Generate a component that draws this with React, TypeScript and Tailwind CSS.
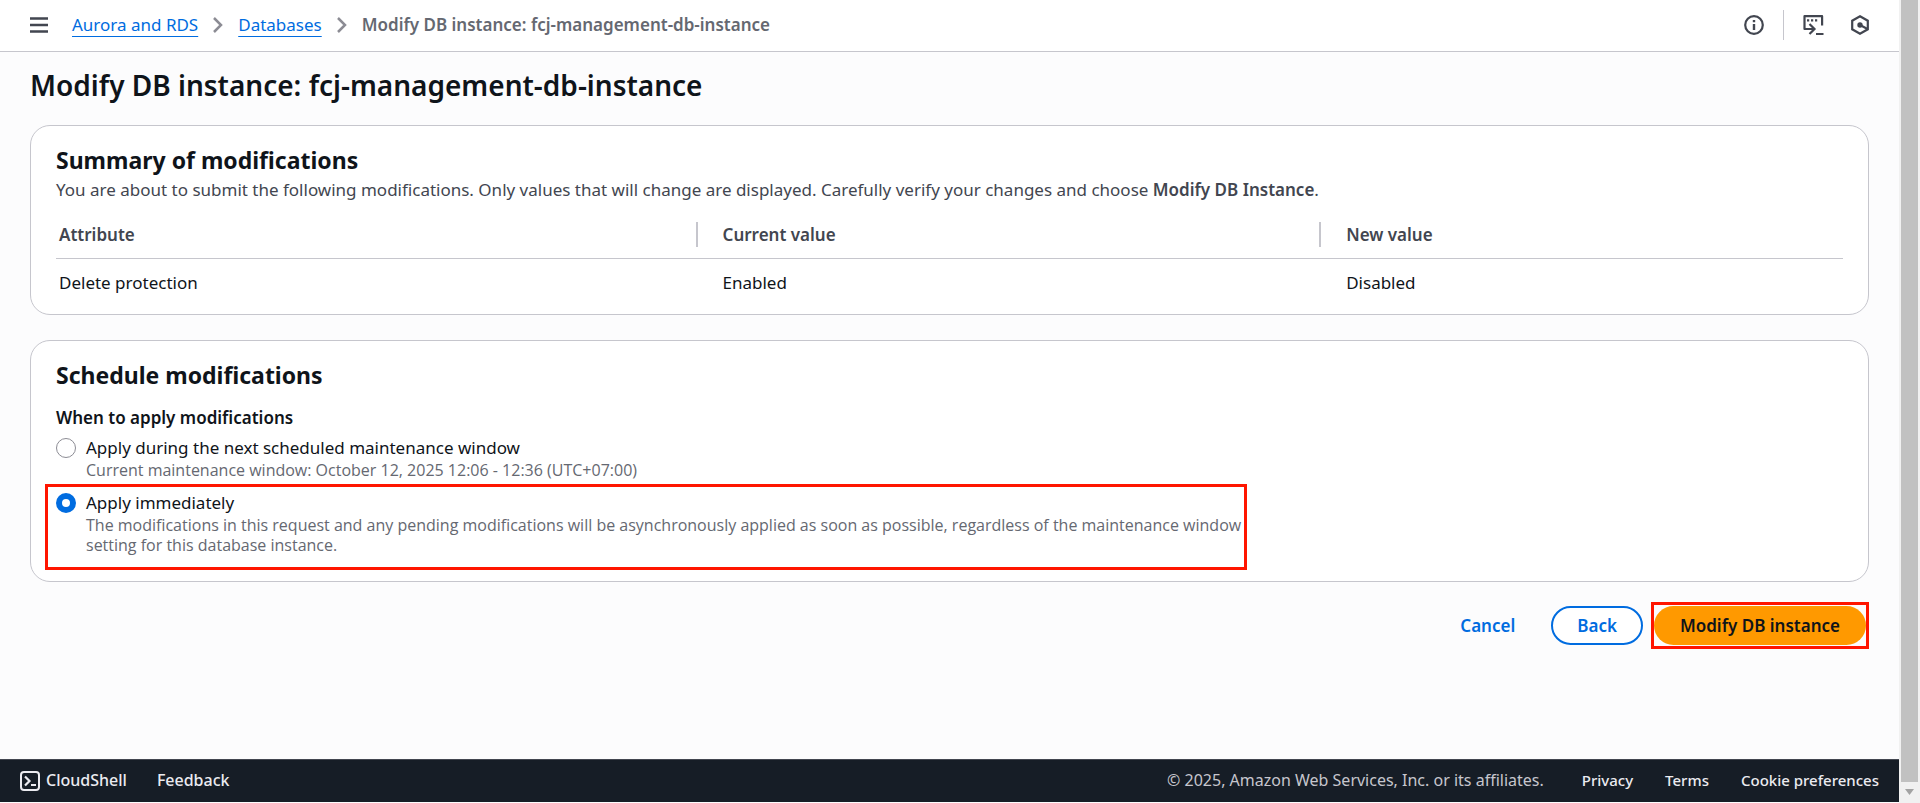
import { useState } from "react";

const breadcrumbs = ["Aurora and RDS", "Databases"];

const modifications = [
  { attribute: "Delete protection", current: "Enabled", next: "Disabled" },
];

function Chevron() {
  return (
    <svg width="12" height="18" viewBox="0 0 12 18" fill="none" stroke="#8c8c94" strokeWidth="2.5" aria-hidden="true">
      <path d="M2 2l7 7-7 7" />
    </svg>
  );
}

function InfoIcon() {
  return (
    <svg width="20" height="20" viewBox="0 0 20 20" fill="none" stroke="#424650" strokeWidth="2.2" aria-hidden="true">
      <circle cx="10" cy="10" r="8.8" />
      <path d="M10 9v6M10 5v2.2" strokeWidth="2.4" />
    </svg>
  );
}

function ShellIcon() {
  return (
    <svg width="21" height="20" viewBox="0 0 21 20" fill="none" stroke="#424650" strokeWidth="2.2" aria-hidden="true">
      <path d="M5 14H1.500V1.200h17.600V10.500M5 14h6" strokeLinejoin="round" />
      <path d="M4 5.300h2.200M8 5.300h2.200M12 5.300h2.200" />
      <path d="M6.500 9l5 5-5 5M13 19h7.500" />
    </svg>
  );
}

function HexIcon() {
  return (
    <svg width="18" height="20" viewBox="0 0 18 20" fill="none" stroke="#424650" strokeWidth="2.2" aria-hidden="true">
      <path d="M9 1.3l7.8 4.4v8.6L9 18.7l-7.8-4.4V5.7z" />
      <circle cx="9" cy="10" r="2.7" fill="#424650" stroke="none" />
      <path d="M9 10l7.5 4" />
    </svg>
  );
}

function CloudShellIcon() {
  return (
    <svg width="20" height="20" viewBox="0 0 20 20" fill="none" stroke="#ebebf0" strokeWidth="2" aria-hidden="true">
      <rect x="1" y="1" width="18" height="18" rx="3" />
      <path d="M5 5.5L9.5 10 5 14.5M11 14h5" strokeWidth="2.2" />
    </svg>
  );
}

const radioClass =
  "m-0 mt-[3px] size-5 shrink-0 appearance-none rounded-full border border-[#8c8c94] bg-white checked:border-[6px] checked:border-[#006ce0]";

const helpClass = "block font-['Open_Sans','Noto_Sans',sans-serif] text-[16px] leading-5 text-[#656871]";

export default function App() {
  const [schedule, setSchedule] = useState("immediate");

  return (
    <div className="flex min-h-screen bg-[#fcfcfd] font-['Noto_Sans','Open_Sans',sans-serif] text-[17px] leading-[25px] text-[#0f141a]">
      <div className="flex min-w-0 flex-1 flex-col">
        <header className="flex h-[52px] shrink-0 items-center justify-between border-b border-[#c6c6cd] bg-white pb-[2px] pl-[30px] pr-[30px]">
          <div className="flex items-center gap-6">
            <button type="button" aria-label="Open navigation">
              <svg width="18" height="16" viewBox="0 0 18 16" stroke="#424650" strokeWidth="2.4" aria-hidden="true">
                <path d="M0 1.5h18M0 8h18M0 14.5h18" />
              </svg>
            </button>
            <nav aria-label="Breadcrumbs" className="flex items-center gap-[14px]">
              {breadcrumbs.map((crumb) => (
                <span key={crumb} className="flex items-center gap-[14px]">
                  <a href="#" className="text-[#006ce0] underline underline-offset-[5px]">{crumb}</a>
                  <Chevron />
                </span>
              ))}
              <span className="font-semibold text-[#656871]">Modify DB instance: fcj-management-db-instance</span>
            </nav>
          </div>
          <div className="flex items-center">
            <button type="button" aria-label="Info"><InfoIcon /></button>
            <span className="ml-[19px] mr-[19px] h-[30px] w-px bg-[#c6c6cd]" />
            <button type="button" aria-label="CloudShell"><ShellIcon /></button>
            <button type="button" aria-label="Amazon Q" className="ml-[27px]"><HexIcon /></button>
          </div>
        </header>

        <main className="flex-1 px-[30px] pt-[15px]">
          <h1 className="text-[28px] font-semibold leading-9">Modify DB instance: fcj-management-db-instance</h1>

          <section className="mt-[22px] rounded-[20px] border border-[#c6c6cd] bg-white px-[25px] py-[19px]">
            <h2 className="text-[23px] font-bold leading-[30px]">Summary of modifications</h2>
            <p className="mt-[2px] text-[#424650]">
              You are about to submit the following modifications. Only values that will change are displayed. Carefully verify your changes and choose <b className="font-semibold">Modify DB Instance</b>.
            </p>
            <table className="mt-2 w-full table-fixed border-collapse text-left">
              <colgroup>
                <col className="w-[35.9%]" />
                <col className="w-[34.9%]" />
                <col />
              </colgroup>
              <thead>
                <tr className="border-b border-[#c6c6cd] text-[#424650]">
                  <th className="pb-[11px] pl-[3px] pt-3 font-semibold"><div className="border-r-2 border-[#c6c6cd]">Attribute</div></th>
                  <th className="pb-[11px] pl-[25px] pt-3 font-semibold"><div className="border-r-2 border-[#c6c6cd]">Current value</div></th>
                  <th className="pb-[11px] pl-[25px] pt-3 font-semibold">New value</th>
                </tr>
              </thead>
              <tbody>
                {modifications.map((row) => (
                  <tr key={row.attribute}>
                    <td className="pl-[3px] pt-[11px]">{row.attribute}</td>
                    <td className="pl-[25px] pt-[11px]">{row.current}</td>
                    <td className="pl-[25px] pt-[11px]">{row.next}</td>
                  </tr>
                ))}
              </tbody>
            </table>
          </section>

          <section className="mt-[25px] rounded-[20px] border border-[#c6c6cd] bg-white px-[25px] pb-[11px] pt-[19px]">
            <h2 className="text-[23px] font-bold leading-[30px]">Schedule modifications</h2>
            <fieldset className="mt-[15px]">
              <legend className="font-semibold">When to apply modifications</legend>
              <div className="mt-[5px] flex gap-[10px]">
                <input id="window" type="radio" name="schedule" className={radioClass} checked={schedule === "window"} onChange={() => setSchedule("window")} />
                <label htmlFor="window">
                  <span className="block">Apply during the next scheduled maintenance window</span>
                  <span className={helpClass}>Current maintenance window: October 12, 2025 12:06 - 12:36 (UTC+07:00)</span>
                </label>
              </div>
              <div className="-ml-[11px] mt-1 flex w-fit gap-[10px] border-3 border-[#ff1500] pb-3 pl-2 pt-[3px]">
                <input id="immediate" type="radio" name="schedule" className={radioClass} checked={schedule === "immediate"} onChange={() => setSchedule("immediate")} />
                <label htmlFor="immediate" className="max-w-[1158px]">
                  <span className="block">Apply immediately</span>
                  <span className={helpClass}>
                    The modifications in this request and any pending modifications will be asynchronously applied as soon as possible, regardless of the maintenance window setting for this database instance.
                  </span>
                </label>
              </div>
            </fieldset>
          </section>

          <div className="mt-5 flex items-center justify-end font-semibold">
            <button type="button" className="px-9 text-[#006ce0]">Cancel</button>
            <button type="button" className="h-[39px] rounded-full border-2 border-[#006ce0] bg-white px-6 text-[#006ce0]">Back</button>
            <div className="ml-2 border-3 border-[#ff1500] py-px">
              <button type="button" className="block h-[39px] rounded-full bg-[#ff9900] px-[26px]">Modify DB instance</button>
            </div>
          </div>
        </main>

        <footer className="mb-px flex h-[43px] shrink-0 items-center justify-between border-t border-[#424650] bg-[#161d26] px-5 pb-px text-[15px] text-[#ebebf0]">
          <div className="flex items-center gap-[30px] text-[16px] font-medium">
            <button type="button" className="flex items-center gap-[6px]"><CloudShellIcon />CloudShell</button>
            <a href="#">Feedback</a>
          </div>
          <div className="flex items-center">
            <span className="mr-[38px] text-[16px] text-[#c6c6cd]">© 2025, Amazon Web Services, Inc. or its affiliates.</span>
            <div className="flex gap-8 font-medium">
              <a href="#">Privacy</a>
              <a href="#">Terms</a>
              <a href="#">Cookie preferences</a>
            </div>
          </div>
        </footer>
      </div>

      <div className="flex w-[21px] shrink-0 flex-col items-center bg-[#f1f1f1] pb-2" aria-hidden="true">
        <div className="w-[17px] flex-1 bg-[#c1c1c1]" />
        <svg className="mt-[7px]" width="9" height="6" viewBox="0 0 9 6" fill="#a3a3a3"><path d="M0 0h9L4.500 6z" /></svg>
      </div>
    </div>
  );
}
